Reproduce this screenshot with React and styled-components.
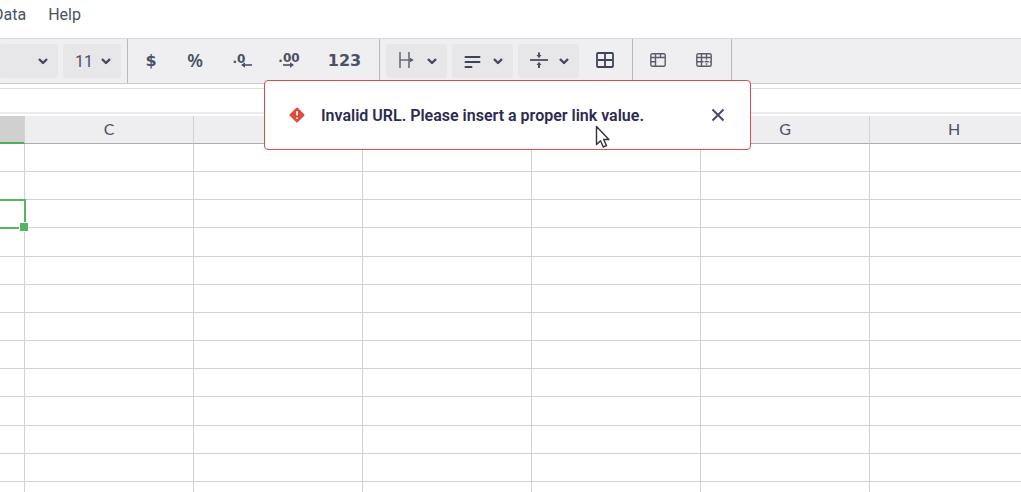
import React, { useState } from "react";
import styled, { createGlobalStyle } from "styled-components";

const GlobalStyle = createGlobalStyle`
  * {
    box-sizing: border-box;
  }
  body {
    margin: 0;
    background: #ffffff;
    font-family: Roboto, "Liberation Sans", sans-serif;
    font-size: 16px;
    color: #4a5066;
    overflow: hidden;
  }
  button, select, input {
    font: inherit;
    color: inherit;
    border: 0;
    margin: 0;
    padding: 0;
    background: transparent;
  }
`;

const Page = styled.div`
  display: flex;
  flex-direction: column;
  height: 100vh;
`;

const MenuBar = styled.nav`
  display: flex;
  gap: 22px;
  height: 38px;
  margin-left: -7px;
  padding-top: 4px;
`;

const MenuLink = styled.a`
  color: #4a5066;
  line-height: 22px;
  text-decoration: none;
`;

const ToolbarWrapper = styled.div`
  display: flex;
  flex: none;
  height: 46px;
  background: #efeff1;
  border-top: 1px solid #d9d9db;
  border-bottom: 1px solid #cfcfd1;
`;

const ToolGroup = styled.div`
  display: flex;
  align-items: center;
  gap: ${props => props.$gap || "0"};
  padding: ${props => props.$padding || "0"};
  border-right: 1px solid #b9b9bd;
`;

const SelectBox = styled.label`
  display: flex;
  align-items: center;
  width: ${props => props.$width};
  height: 34px;
  padding: 0 10px 0 12px;
  border-radius: 3px;
  background: #e7e7ea;

  select {
    flex: 1;
    min-width: 0;
    appearance: none;
    outline: none;
  }
`;

const DropButton = styled.button`
  display: flex;
  align-items: center;
  justify-content: space-between;
  width: 61px;
  height: 34px;
  padding: 0 10px 0 12px;
  border-radius: 3px;
  background: #e7e7ea;
`;

const ToolButton = styled.button`
  display: flex;
  flex-direction: column;
  align-items: center;
  justify-content: center;
  width: ${props => props.$width || "46px"};
  height: 34px;
  padding-bottom: 2px;
  font-family: "DejaVu Sans", sans-serif;
  font-size: 16px;
  font-weight: bold;
`;

const Percent = styled.span`
  font-family: "Noto Sans", sans-serif;
  font-size: 18px;
  font-weight: 600;
  line-height: 20px;
`;

const Decimals = styled.span`
  font-size: 12px;
  line-height: 12px;
`;

const FormulaInput = styled.input`
  && {
    flex: none;
    width: 100%;
    height: 26px;
    margin: 4px 0 2px;
    padding: 0 8px;
    border-top: 1px solid #dddddf;
    border-bottom: 2px solid #ececee;
    outline: none;
  }
`;

const SheetArea = styled.div`
  flex: 1;
  min-height: 0;
  overflow: hidden;
`;

const Sheet = styled.table`
  table-layout: fixed;
  width: 1039px;
  height: 100%;
  border-collapse: separate;
  border-spacing: 0;
`;

const ColumnHead = styled.th`
  height: 28px;
  padding: 0 0 2px;
  background: ${props => (props.$active ? "#d0d0d0" : "#eeeef0")};
  border-right: 1px solid #d2d2d4;
  border-bottom: ${props => (props.$active ? "2px solid #4fae5c" : "1px solid #acacae")};
  font-family: Lato, sans-serif;
  font-weight: normal;
  line-height: 20px;
`;

const Cell = styled.td`
  position: relative;
  padding: 0;
  border-right: 1px solid #d2d2d2;
  border-bottom: 1px solid #d2d2d2;

  tr:last-child > & {
    border-bottom: 0;
  }
`;

const Selection = styled.div`
  position: absolute;
  z-index: 1;
  inset: -1px -2px -2px -4px;
  border: 2px solid #55b462;

  &::after {
    content: "";
    position: absolute;
    right: -5px;
    bottom: -5px;
    width: 8px;
    height: 8px;
    border: 1px solid #ffffff;
    background: #55b462;
  }
`;

const Toast = styled.div`
  position: fixed;
  z-index: 2;
  top: 80px;
  left: 264px;
  display: flex;
  align-items: center;
  width: 487px;
  height: 70px;
  padding: 0 24px;
  background: #ffffff;
  border: 1px solid #d0504a;
  border-radius: 4px;
`;

const ToastText = styled.p`
  flex: 1;
  margin: 0 0 0 16px;
  color: #2b2a50;
  font-weight: 600;
`;

const CloseButton = styled.button`
  display: flex;
  color: #484a6c;
`;

const Pointer = styled.svg`
  position: fixed;
  z-index: 3;
  top: 125px;
  left: 595px;
`;

const Chevron = () => (
  <svg width="10" height="8" viewBox="0 0 10 8" fill="none" stroke="#43475f" strokeWidth="2.4">
    <path d="M1 2l4 4 4-4" strokeLinejoin="round" />
  </svg>
);

const Arrow = ({ left }) => (
  <svg width="11" height="6" viewBox="0 0 11 6" fill="currentColor">
    <path d={left ? "M3 2.2h8v1.6H3z" : "M0 2.2h8v1.6H0z"} />
    <path d={left ? "M0 3L4 .2v5.6z" : "M11 3L7 .2v5.6z"} />
  </svg>
);

const DecimalLabel = styled.span`
  display: grid;
  justify-items: ${props => (props.$left ? "start" : "center")};

  svg {
    margin: ${props => (props.$left ? "-3px 0 0 8px" : "-2px 0 0")};
  }
`;

const OverflowIcon = () => (
  <svg width="18" height="18" viewBox="0 0 18 18" fill="none" stroke="#686c7b" strokeWidth="1.6">
    <path d="M2 0v16M11 0v16M2 8h11" />
    <path d="M12 5.7L15.8 8 12 10.3z" fill="#565a6a" stroke="none" />
  </svg>
);

const AlignIcon = () => (
  <svg width="17" height="14" viewBox="0 0 17 14" stroke="#3f445a" strokeWidth="2" strokeLinecap="round">
    <path d="M1.5 3h14M1.5 8h14M1.5 13h6" />
  </svg>
);

const MiddleIcon = () => (
  <svg width="18" height="18" viewBox="0 0 18 18" stroke="#4a4e60" fill="#4a4e60">
    <path d="M0 8h18" strokeWidth="1.8" />
    <path d="M9 .5v3M9 12.5v3.5" strokeWidth="2" />
    <path d="M6.5 3h5L9 6.2zM6.5 13h5L9 9.8z" stroke="none" />
  </svg>
);

const BordersIcon = () => (
  <svg width="18" height="16" viewBox="0 0 18 16" fill="none" stroke="#3f445a" strokeWidth="1.8">
    <rect x="1" y="1" width="16" height="14" rx="1" />
    <path d="M9 2v12M2 8h14" />
  </svg>
);

const FreezeIcon = () => (
  <svg width="16" height="14" viewBox="0 0 16 14" fill="none" stroke="#5a5d6b" strokeWidth="1.4">
    <rect x=".8" y=".8" width="14.4" height="12.4" rx="1.5" />
    <path d="M1 4.5h14M5.5 1v12M10.5 1v3.5M1 8.8h4.5" />
  </svg>
);

const GridIcon = () => (
  <svg width="16" height="14" viewBox="0 0 16 14" fill="none" stroke="#5a5d6b" strokeWidth="1.4">
    <rect x=".8" y=".8" width="14.4" height="12.4" rx="1.5" />
    <path d="M1 4.5h14M5.5 1v12M10.5 1v3.5M1 8.8h4.5" />
    <path d="M10.5 5v8M6 8.8h9" strokeDasharray="1.6 1" />
  </svg>
);

const columns = ["C", "D", "E", "F", "G", "H"];
const rows = [1, 2, 3, 4, 5, 6, 7, 8, 9, 10, 11, 12, 13];
const selectedRow = 3;

const dropButtons = [
  { label: "Text overflow", icon: <OverflowIcon /> },
  { label: "Horizontal align", icon: <AlignIcon /> },
  { label: "Vertical align", icon: <MiddleIcon /> }
];

const Toolbar = () => (
  <ToolbarWrapper role="toolbar">
    <ToolGroup $gap="5px" $padding="0 6px 0 0">
      <SelectBox $width="58px">
        <select aria-label="Font"><option></option></select>
        <Chevron />
      </SelectBox>
      <SelectBox $width="58px">
        <select aria-label="Font size"><option>11</option></select>
        <Chevron />
      </SelectBox>
    </ToolGroup>
    <ToolGroup>
      <ToolButton>$</ToolButton>
      <ToolButton $width="42px"><Percent>%</Percent></ToolButton>
      <ToolButton $width="52px" aria-label="Decrease decimals">
        <DecimalLabel $left><Decimals>.0</Decimals><Arrow left /></DecimalLabel>
      </ToolButton>
      <ToolButton $width="42px" aria-label="Increase decimals">
        <DecimalLabel><Decimals>.00</Decimals><Arrow /></DecimalLabel>
      </ToolButton>
      <ToolButton $width="69px">123</ToolButton>
    </ToolGroup>
    <ToolGroup $gap="5px" $padding="0 6px">
      {dropButtons.map(item => (
        <DropButton key={item.label} aria-label={item.label} aria-haspopup="menu">
          {item.icon}
          <Chevron />
        </DropButton>
      ))}
      <ToolButton $width="42px" aria-label="Borders"><BordersIcon /></ToolButton>
    </ToolGroup>
    <ToolGroup $padding="0 4px 0 2px">
      <ToolButton aria-label="Freeze"><FreezeIcon /></ToolButton>
      <ToolButton aria-label="Gridlines"><GridIcon /></ToolButton>
    </ToolGroup>
  </ToolbarWrapper>
);

const ErrorToast = ({ onClose }) => (
  <Toast role="alert">
    <svg width="16" height="16" viewBox="0 0 16 16">
      <rect x="2.4" y="2.4" width="11.2" height="11.2" rx="1" fill="#df4b3c" transform="rotate(45 8 8)" />
      <path d="M8 4v4.6M8 10.4v1.6" stroke="#ffffff" strokeWidth="1.7" />
    </svg>
    <ToastText>Invalid URL. Please insert a proper link value.</ToastText>
    <CloseButton aria-label="Close" onClick={onClose}>
      <svg width="16" height="16" viewBox="0 0 16 16" stroke="currentColor" strokeWidth="2">
        <path d="M2.5 2.5l11 11M13.5 2.5l-11 11" />
      </svg>
    </CloseButton>
  </Toast>
);

const App = () => {
  const [showToast, setShowToast] = useState(true);

  return (
    <Page>
      <GlobalStyle />
      <MenuBar>
        <MenuLink href="#data">Data</MenuLink>
        <MenuLink href="#help">Help</MenuLink>
      </MenuBar>
      <Toolbar />
      <FormulaInput aria-label="Formula" />
      <SheetArea>
        <Sheet>
          <colgroup>
            <col style={{ width: 25 }} />
            {columns.map(name => <col key={name} />)}
          </colgroup>
          <thead>
            <tr>
              <ColumnHead $active />
              {columns.map(name => <ColumnHead key={name}>{name}</ColumnHead>)}
            </tr>
          </thead>
          <tbody>
            {rows.map(row => (
              <tr key={row} style={{ height: row === rows.length ? 10 : 28 }}>
                <Cell>{row === selectedRow && <Selection />}</Cell>
                {columns.map(name => <Cell key={name} />)}
              </tr>
            ))}
          </tbody>
        </Sheet>
      </SheetArea>
      {showToast && <ErrorToast onClose={() => setShowToast(false)} />}
      <Pointer width="15" height="24" viewBox="0 0 15 24">
        <path
          d="M1.5 1.5v18l4-3.8 2.8 6.3 3.2-1.4-2.8-6.1h5.2z"
          fill="#ffffff"
          stroke="#33333a"
          strokeWidth="1.4"
          strokeLinejoin="round"
        />
      </Pointer>
    </Page>
  );
};

export default App;
